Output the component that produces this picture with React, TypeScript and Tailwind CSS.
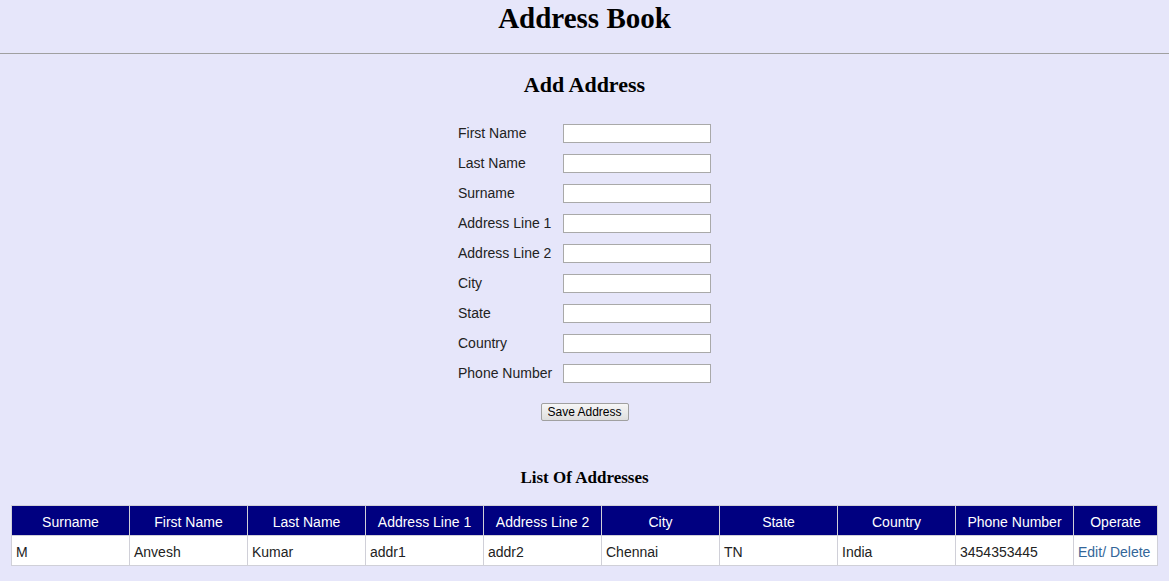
import React from "react";

const fields = [
  "First Name",
  "Last Name",
  "Surname",
  "Address Line 1",
  "Address Line 2",
  "City",
  "State",
  "Country",
  "Phone Number",
];

const columns = [
  "Surname",
  "First Name",
  "Last Name",
  "Address Line 1",
  "Address Line 2",
  "City",
  "State",
  "Country",
  "Phone Number",
];

const rows = [
  ["M", "Anvesh", "Kumar", "addr1", "addr2", "Chennai", "TN", "India", "3454353445"],
];

const App = () => {
  return (
    <div className="min-h-[581px] w-full bg-[#e6e6fa] font-['Liberation_Sans',Arial,sans-serif] text-[#222]">
      <h1 className="h-[53px] pt-[2px] text-center font-['Liberation_Serif','Times_New_Roman',serif] text-[29px] font-bold leading-[32px] text-black">
        Address Book
      </h1>
      <hr className="border-0 border-t border-[#a0a0a0]" />

      <h2 className="mt-[19px] text-center font-['Liberation_Serif','Times_New_Roman',serif] text-[22px] font-bold leading-[24px] text-black">
        Add Address
      </h2>

      <div className="mt-[27px] flex flex-col items-center">
        <div className="flex flex-col gap-[11px]">
          {fields.map((f) => (
            <div key={f} className="flex items-center">
              <label className="w-[105px] text-[14px] leading-[19px]">{f}</label>
              <input
                type="text"
                className="h-[19px] w-[148px] border border-[#a9a9a9] bg-white px-1 text-[13px] outline-none"
              />
            </div>
          ))}
        </div>
        <button className="mt-[20px] h-[18px] w-[88px] rounded-[2px] border border-[#a0a0a0] bg-gradient-to-b from-[#f6f6f6] to-[#dedede] text-[12px] leading-[16px] text-black">
          Save Address
        </button>
      </div>

      <h3 className="mt-[48px] text-center font-['Liberation_Serif','Times_New_Roman',serif] text-[17px] font-bold leading-[18px] text-black">
        List Of Addresses
      </h3>

      <div className="mx-[11px] mt-[18px] pb-[14px]">
        <table className="w-full table-fixed border-collapse text-[14px]">
          <thead>
            <tr className="h-[30px] bg-[#000080] text-white">
              {columns.map((c) => (
                <th key={c} className="w-[118px] border border-[#d0d0d8] pt-[4px] text-center font-normal">
                  {c}
                </th>
              ))}
              <th className="border border-[#d0d0d8] pt-[4px] text-center font-normal">Operate</th>
            </tr>
          </thead>
          <tbody>
            {rows.map((r, i) => (
              <tr key={i} className="h-[30px] bg-white">
                {r.map((v, j) => (
                  <td key={j} className="border border-[#d0d0d8] px-[4px] pt-[4px]">
                    {v}
                  </td>
                ))}
                <td className="border border-[#d0d0d8] px-[4px] pt-[4px] text-[#336699]">
                  <a href="#">Edit</a>/ <a href="#">Delete</a>
                </td>
              </tr>
            ))}
          </tbody>
        </table>
      </div>
    </div>
  );
};

export default App;
